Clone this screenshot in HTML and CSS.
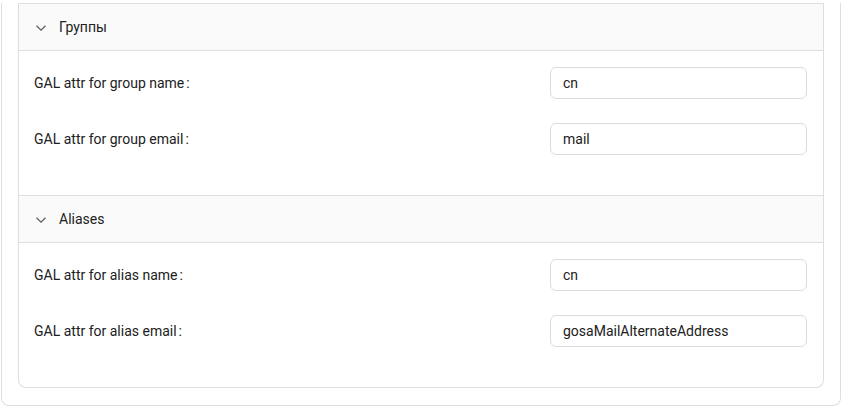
FILE: index.html
```html
<!DOCTYPE html>
<html>
<head>
<meta charset="utf-8">
<link rel="stylesheet" href="styles.css">
</head>
<body>
<div class="outer">
  <div class="inner">
    <section class="section">
      <div class="section-head">
        <svg class="chev" width="12" height="8" viewBox="0 0 12 8"><path d="M1.5 1.8 L6 6.2 L10.5 1.8" fill="none" stroke="#5f5f5f" stroke-width="1.3"/></svg>
        <span class="title">Группы</span>
      </div>
      <div class="section-body">
        <div class="row">
          <label class="label">GAL attr for group name<span class="colon">:</span></label>
          <div class="field">cn</div>
        </div>
        <div class="row">
          <label class="label">GAL attr for group email<span class="colon">:</span></label>
          <div class="field">mail</div>
        </div>
      </div>
    </section>
    <section class="section">
      <div class="section-head">
        <svg class="chev" width="12" height="8" viewBox="0 0 12 8"><path d="M1.5 1.8 L6 6.2 L10.5 1.8" fill="none" stroke="#5f5f5f" stroke-width="1.3"/></svg>
        <span class="title">Aliases</span>
      </div>
      <div class="section-body">
        <div class="row">
          <label class="label">GAL attr for alias name<span class="colon">:</span></label>
          <div class="field">cn</div>
        </div>
        <div class="row">
          <label class="label">GAL attr for alias email<span class="colon">:</span></label>
          <div class="field">gosaMailAlternateAddress</div>
        </div>
      </div>
    </section>
  </div>
</div>
</body>
</html>
```
FILE: styles.css
```css
html, body {
  margin: 0;
  padding: 0;
  background: #ffffff;
}
body {
  font-family: Roboto, "Noto Sans", sans-serif;
  font-size: 14px;
  color: #212121;
  padding-top: 3px;
}
.outer {
  box-sizing: border-box;
  width: 840px;
  margin-left: 1px;
  border: 1px solid #dedede;
  border-top: none;
  border-radius: 0 0 8px 8px;
  padding: 0 16px 17px 16px;
}
.inner {
  border: 1px solid #dedede;
  border-top: none;
  border-radius: 0 0 8px 8px;
  overflow: hidden;
}
.section-head {
  display: flex;
  align-items: center;
  height: 46px;
  background: #fafafa;
  border-top: 1px solid #dedede;
  border-bottom: 1px solid #dedede;
  padding-left: 16px;
}
.chev {
  display: block;
  margin-right: 12px;
  margin-top: 1px;
}
.title {
  font-size: 14px;
  color: #212121;
  margin-top: -1px;
}
.section-body {
  padding: 16px 16px 40px 15px;
  display: flex;
  flex-direction: column;
  gap: 24px;
}
.row {
  display: flex;
  align-items: center;
  justify-content: space-between;
  height: 32px;
}
.label {
  font-size: 14px;
}
.colon {
  margin-left: 2px;
}
.field {
  box-sizing: border-box;
  width: 257px;
  height: 32px;
  border: 1px solid #dcdcdc;
  border-radius: 6px;
  padding: 0 12px;
  display: flex;
  align-items: center;
  font-size: 14px;
  color: #212121;
}
```
